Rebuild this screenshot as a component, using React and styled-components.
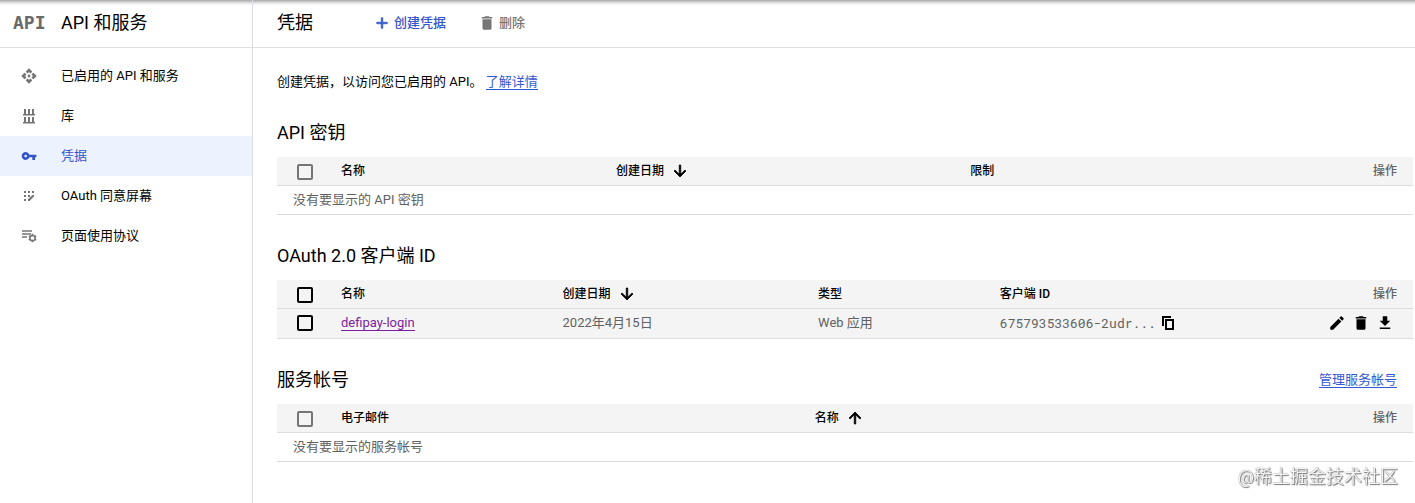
import React from "react";
import styled, { createGlobalStyle } from "styled-components";
import {
  MdAdd,
  MdArrowDownward,
  MdArrowUpward,
  MdDelete,
  MdEdit,
  MdGetApp,
  MdVpnKey,
} from "react-icons/md";

const navItems = [
  { label: "已启用的 API 和服务", icon: EnabledIcon },
  { label: "库", icon: LibraryIcon },
  { label: "凭据", icon: MdVpnKey, active: true },
  { label: "OAuth 同意屏幕", icon: ConsentIcon },
  { label: "页面使用协议", icon: AgreementIcon },
];

export default function App() {
  return (
    <>
      <GlobalStyle />
      <Page>
        <Sidebar>
          <SidebarHeader>
            <Logo>API</Logo>
            <Title as="h2">API 和服务</Title>
          </SidebarHeader>
          <Nav>
            {navItems.map(({ label, icon: Icon, active }) => (
              <NavItem key={label} href="#" $active={active}>
                <Icon size={16} />
                {label}
              </NavItem>
            ))}
          </Nav>
        </Sidebar>
        <Main>
          <Toolbar>
            <Title as="h1">凭据</Title>
            <Actions>
              <ToolButton type="button" $primary>
                <BoldIcon as={MdAdd} size={18} />
                创建凭据
              </ToolButton>
              <ToolButton type="button">
                <MdDelete size={18} />
                删除
              </ToolButton>
            </Actions>
          </Toolbar>
          <Content>
            <Intro>
              创建凭据，以访问您已启用的 API。 <Link href="#">了解详情</Link>
            </Intro>
            <ApiKeys />
            <OAuthClients />
            <ServiceAccounts />
          </Content>
        </Main>
      </Page>
      <Watermark>@稀土掘金技术社区</Watermark>
    </>
  );
}

function ApiKeys() {
  return (
    <section>
      <SectionHeader>
        <Title as="h2">API 密钥</Title>
      </SectionHeader>
      <Table>
        <colgroup>
          <Col $width="64px" />
          <Col $width="24.2%" />
          <Col $width="31.2%" />
          <Col />
          <Col $width="120px" />
        </colgroup>
        <thead>
          <tr>
            <HeadCell>
              <Checkbox aria-label="选择所有 API 密钥" $muted />
            </HeadCell>
            <HeadCell>名称</HeadCell>
            <HeadCell>
              <Sort>
                创建日期
                <BoldIcon as={MdArrowDownward} size={18} />
              </Sort>
            </HeadCell>
            <HeadCell>限制</HeadCell>
            <HeadCell $end>操作</HeadCell>
          </tr>
        </thead>
        <tbody>
          <tr>
            <EmptyCell colSpan={5}>没有要显示的 API 密钥</EmptyCell>
          </tr>
        </tbody>
      </Table>
    </section>
  );
}

function OAuthClients() {
  return (
    <section>
      <SectionHeader>
        <Title as="h2">OAuth 2.0 客户端 ID</Title>
      </SectionHeader>
      <Table>
        <colgroup>
          <Col $width="64px" />
          <Col $width="19.5%" />
          <Col $width="22.5%" />
          <Col $width="16%" />
          <Col />
          <Col $width="120px" />
        </colgroup>
        <thead>
          <tr>
            <HeadCell>
              <Checkbox aria-label="选择所有客户端" />
            </HeadCell>
            <HeadCell>名称</HeadCell>
            <HeadCell>
              <Sort>
                创建日期
                <BoldIcon as={MdArrowDownward} size={18} />
              </Sort>
            </HeadCell>
            <HeadCell>类型</HeadCell>
            <HeadCell>客户端 ID</HeadCell>
            <HeadCell $end>操作</HeadCell>
          </tr>
        </thead>
        <tbody>
          <tr>
            <Cell>
              <Checkbox aria-label="选择 defipay-login" />
            </Cell>
            <Cell>
              <Link href="#" $visited>
                defipay-login
              </Link>
            </Cell>
            <Cell>2022年4月15日</Cell>
            <Cell>Web 应用</Cell>
            <Cell>
              <ClientId>
                <code>675793533606-2udr...</code>
                <IconButton type="button" aria-label="复制">
                  <CopyIcon />
                </IconButton>
              </ClientId>
            </Cell>
            <Cell>
              <RowActions>
                <IconButton type="button" aria-label="修改">
                  <MdEdit size={18} />
                </IconButton>
                <IconButton type="button" aria-label="删除">
                  <MdDelete size={18} />
                </IconButton>
                <IconButton type="button" aria-label="下载">
                  <MdGetApp size={18} />
                </IconButton>
              </RowActions>
            </Cell>
          </tr>
        </tbody>
      </Table>
    </section>
  );
}

function ServiceAccounts() {
  return (
    <section>
      <SectionHeader>
        <Title as="h2">服务帐号</Title>
        <Link href="#">管理服务帐号</Link>
      </SectionHeader>
      <Table>
        <colgroup>
          <Col $width="64px" />
          <Col $width="41.7%" />
          <Col />
          <Col $width="120px" />
        </colgroup>
        <thead>
          <tr>
            <HeadCell>
              <Checkbox aria-label="选择所有服务帐号" $muted />
            </HeadCell>
            <HeadCell>电子邮件</HeadCell>
            <HeadCell>
              <Sort>
                名称
                <BoldIcon as={MdArrowUpward} size={18} />
              </Sort>
            </HeadCell>
            <HeadCell $end>操作</HeadCell>
          </tr>
        </thead>
        <tbody>
          <tr>
            <EmptyCell colSpan={4}>没有要显示的服务帐号</EmptyCell>
          </tr>
        </tbody>
      </Table>
    </section>
  );
}

function EnabledIcon({ size }) {
  return (
    <svg width={size} height={size} viewBox="0 0 16 16" fill="currentColor">
      <path d="M8 .3l3.200 3.200L9.700 5.500 8 4.200 6.300 5.500 4.800 3.500z" />
      <path d="M8 15.700l3.200-3.200-1.500-2L8 11.800l-1.700-1.300-1.500 2z" />
      <path d="M.3 8l3.200-3.200 2 1.500L4.200 8l1.300 1.700-2 1.500z" />
      <path d="M15.700 8l-3.200-3.200-2 1.500L11.800 8l-1.300 1.700 2 1.500z" />
      <circle cx="8" cy="8" r="1.400" />
    </svg>
  );
}

function LibraryIcon({ size }) {
  return (
    <svg width={size} height={size} viewBox="0 0 16 16" fill="currentColor">
      <path d="M2 6h12v1.500H2zM3 1h2v5H3zM7 1h2v5H7zM11 1h2v5h-2z" />
      <path d="M2 14h12v1.500H2zM3 9h2v5H3zM7 9h2v5H7zM11 9h2v5h-2z" />
    </svg>
  );
}

function ConsentIcon({ size }) {
  return (
    <svg width={size} height={size} viewBox="0 0 16 16" fill="currentColor">
      <path d="M3 3h2v2H3zM7 3h2v2H7zM11 3h2v2h-2zM3 7h2v2H3zM7 7h2v2H7zM3 11h2v2H3z" />
      <path d="M7 13v-1.700L12 6.500l1.500 1.500-5 5z" />
    </svg>
  );
}

function AgreementIcon({ size }) {
  return (
    <svg width={size} height={size} viewBox="0 0 16 16" fill="none" stroke="currentColor">
      <path d="M1 3h10M1 6h9M1 9h5" strokeWidth="1.4" />
      <circle cx="11.500" cy="10" r="2.600" strokeWidth="1.500" />
      <path
        d="M11.500 5.800v1.500M11.500 12.700v1.500M7.900 7.900l1.300.8M13.800 11.300l1.300.8M7.900 12.100l1.300-.8M13.800 8.700l1.300-.8"
        strokeWidth="1.800"
      />
    </svg>
  );
}

function CopyIcon() {
  return (
    <svg width="12" height="14" viewBox="0 0 12 14" fill="none" stroke="currentColor" strokeWidth="2">
      <path d="M1 10V1h8" />
      <path d="M4 4h7v9H4z" />
    </svg>
  );
}

const GlobalStyle = createGlobalStyle`
  * {
    box-sizing: border-box;
  }
  body {
    margin: 0;
    background: #ffffff;
    color: #202124;
    font-family: Roboto, "Noto Sans CJK SC", sans-serif;
    font-size: 13px;
    line-height: 20px;
  }
`;

const Page = styled.div`
  display: flex;
  min-height: 100vh;
  background: linear-gradient(#a8a8a8, #d0d0d0 2px, #f4f4f4 4px, #ffffff 6px);
`;

const Sidebar = styled.aside`
  flex: 0 0 253px;
  border-right: 1px solid #dadce0;
`;

const SidebarHeader = styled.div`
  display: flex;
  align-items: center;
  height: 48px;
  padding: 0 13px 2px;
  gap: 15px;
  border-bottom: 1px solid #e0e0e0;
`;

const Logo = styled.span`
  width: 33px;
  color: #6a6a6a;
  font-family: "DejaVu Sans Mono", monospace;
  font-size: 18px;
  font-weight: 700;
`;

const Title = styled.h2`
  margin: 0;
  color: #000000;
  font-size: 18px;
  font-weight: 400;
  line-height: 24px;
`;

const Nav = styled.nav`
  display: flex;
  flex-direction: column;
  padding-top: 8px;
`;

const NavItem = styled.a`
  display: flex;
  align-items: center;
  gap: 24px;
  height: 40px;
  padding-left: 21px;
  color: ${(props) => (props.$active ? "#3355cc" : "#000000")};
  background: ${(props) => (props.$active ? "#ecf3fe" : "transparent")};
  text-decoration: none;
  svg {
    color: ${(props) => (props.$active ? "#3355cc" : "#757575")};
  }
`;

const Main = styled.main`
  flex: 1;
  min-width: 0;
`;

const Toolbar = styled.header`
  display: flex;
  align-items: center;
  gap: 60px;
  height: 48px;
  padding: 0 24px 2px;
  border-bottom: 1px solid #e0e0e0;
`;

const Actions = styled.div`
  display: flex;
  gap: 32px;
`;

const ToolButton = styled.button`
  display: flex;
  align-items: center;
  gap: 3px;
  padding: 0;
  border: 0;
  background: none;
  color: ${(props) => (props.$primary ? "#3355cc" : "#757575")};
  font: inherit;
  font-weight: 500;
`;

// react-icons puts a transparent bounding path first, so leave that one unstroked
const BoldIcon = styled.svg`
  path:not([fill="none"]) {
    stroke: currentColor;
    stroke-width: 1;
  }
`;

const Content = styled.div`
  display: flex;
  flex-direction: column;
  gap: 29px;
  padding: 24px 2px 24px 24px;
`;

const Intro = styled.p`
  margin: 0;
  color: #000000;
`;

const Link = styled.a`
  color: ${(props) => (props.$visited ? "#7b1fa2" : "#3558d4")};
  line-height: 14px;
  text-decoration: none;
  border-bottom: 1px solid;
`;

const SectionHeader = styled.div`
  display: flex;
  align-items: center;
  justify-content: space-between;
  margin-bottom: 12px;
  padding-right: 16px;
`;

const Table = styled.table`
  width: 100%;
  table-layout: fixed;
  border-collapse: separate;
  border-spacing: 0;
`;

const Col = styled.col`
  width: ${(props) => props.$width || "auto"};
`;

const HeadCell = styled.th`
  height: 29px;
  padding: ${(props) => (props.$end ? "0 16px 0 0" : "0")};
  background: #f4f4f4;
  border-bottom: 1px solid #dadce0;
  color: ${(props) => (props.$end ? "#616161" : "#000000")};
  font-size: 12px;
  font-weight: 500;
  text-align: ${(props) => (props.$end ? "right" : "left")};
`;

const Cell = styled.td`
  height: 30px;
  padding: 0 0 2px;
  background: #f4f4f4;
  border-bottom: 1px solid #dadce0;
  color: #616161;
`;

const EmptyCell = styled.td`
  height: 29px;
  padding: 0 16px;
  border-bottom: 1px solid #dadce0;
  color: #616161;
`;

const Sort = styled.div`
  display: flex;
  align-items: center;
  gap: 7px;
`;

const Checkbox = styled.input.attrs({ type: "checkbox" })`
  display: block;
  appearance: none;
  width: 16px;
  height: 16px;
  margin: 1px 0 0 20px;
  border: 2px solid ${(props) => (props.$muted ? "#757575" : "#000000")};
  border-radius: 2px;
`;

const ClientId = styled.div`
  display: flex;
  align-items: center;
  gap: 6px;
  code {
    font-family: "Roboto Mono", "Liberation Mono", monospace;
    font-size: 13px;
  }
`;

const RowActions = styled.div`
  display: flex;
  justify-content: flex-end;
  gap: 6px;
  padding-right: 19px;
`;

const IconButton = styled.button`
  display: flex;
  padding: 0;
  border: 0;
  background: none;
  color: #000000;
`;

const Watermark = styled.div`
  position: fixed;
  right: 17px;
  bottom: 14px;
  color: #f4f4f4;
  font-size: 18px;
  line-height: 24px;
  text-shadow: 1px 1px 1px rgba(0, 0, 0, 0.5), 0 0 1px rgba(0, 0, 0, 0.6);
`;
